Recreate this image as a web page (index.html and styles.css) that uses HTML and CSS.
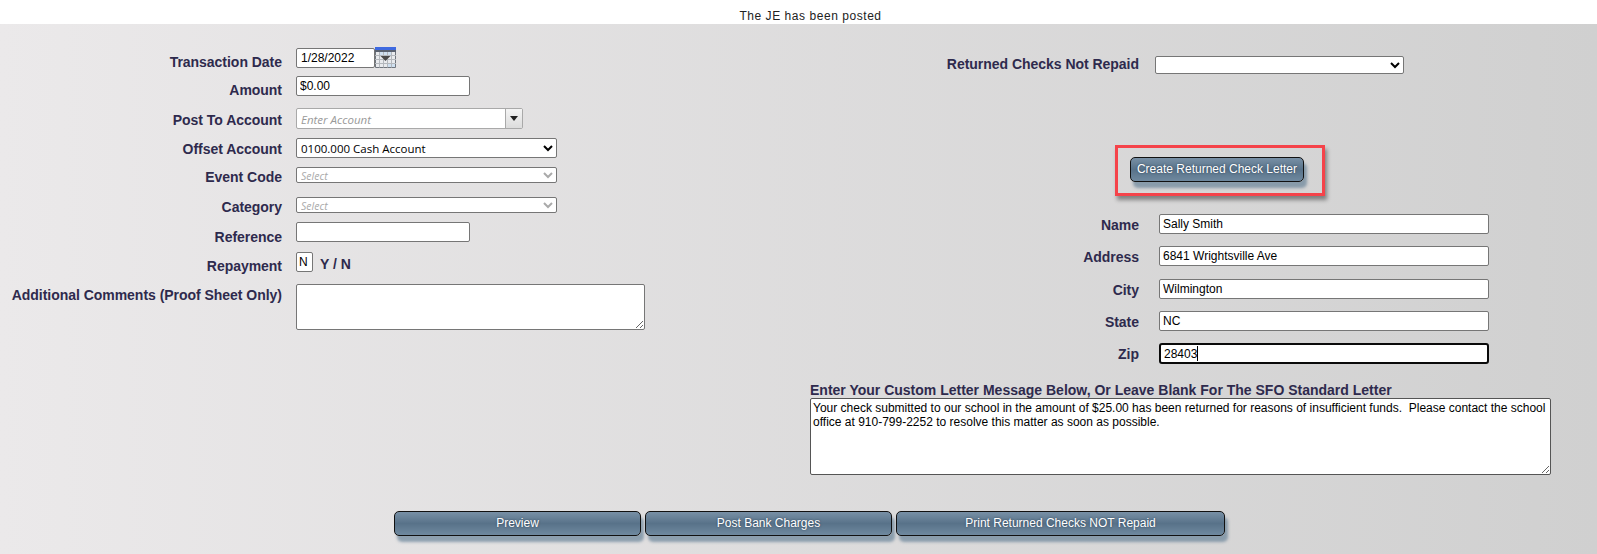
FILE: index.html
```html
<!DOCTYPE html>
<html lang="en">
<head>
<meta charset="utf-8">
<title>Returned Check</title>
<link rel="stylesheet" href="styles.css">
</head>
<body>
<div class="notice">The JE has been posted</div>
<main class="panel">
  <div class="columns">
    <form class="form-left">
      <label class="lbl nudge-6">Transaction Date</label>
      <div class="date-field">
        <input class="field date-input" type="text" value="1/28/2022">
        <svg class="cal" width="21" height="21" viewBox="0 0 21 21" aria-hidden="true">
          <rect x="0" y="0" width="21" height="21" fill="#e9ebee"/>
          <rect x="0" y="0" width="21" height="3" fill="#3f6ae0"/>
          <rect x="0" y="3" width="21" height="2" fill="#5a6270"/>
          <rect x="5" y="5" width="11" height="3" fill="#cfe0f0"/>
          <rect x="12" y="17" width="8" height="3" fill="#cfe0f0"/>
          <path d="M0.5 5V20.5H20.5V5" fill="none" stroke="#70767e" stroke-width="1"/>
          <path d="M4.5 5V20.5M8.5 5V20.5M12.5 5V20.5M16.5 5V20.5M0 8.5H21M0 12.5H21M0 16.5H21" fill="none" stroke="#b4b8bd" stroke-width="1"/>
          <path d="M5.5 9H15.5L10.5 14Z" fill="#4a4a4a"/>
        </svg>
      </div>

      <label class="lbl nudge-6">Amount</label>
      <input class="field short" type="text" value="$0.00">

      <label class="lbl nudge-4">Post To Account</label>
      <div class="combo">
        <span class="combo-text">Enter Account</span>
        <span class="combo-btn"><svg width="8" height="5" viewBox="0 0 8 5" aria-hidden="true"><path d="M0 0H8L4 5Z" fill="#222"/></svg></span>
      </div>

      <label class="lbl nudge-3">Offset Account</label>
      <select class="sel sel-offset"><option>0100.000 Cash Account</option></select>

      <label class="lbl nudge-2">Event Code</label>
      <select class="sel sel-muted"><option>Select</option></select>

      <label class="lbl nudge-2">Category</label>
      <select class="sel sel-muted"><option>Select</option></select>

      <label class="lbl nudge-7">Reference</label>
      <input class="field short" type="text">

      <label class="lbl nudge-6">Repayment</label>
      <div class="yn"><input class="field tiny" type="text" value="N"><span class="yn-text">Y / N</span></div>

      <label class="lbl nudge-3">Additional Comments (Proof Sheet Only)</label>
      <textarea class="area area-comments"></textarea>
    </form>

    <section class="form-right">
      <div class="returned-row">
        <label class="lbl">Returned Checks Not Repaid</label>
        <select class="sel sel-returned"><option></option></select>
      </div>
      <div class="letter-btn-wrap">
        <div class="highlight"><button class="btn" type="button">Create Returned Check Letter</button></div>
      </div>
      <div class="addr">
        <label class="lbl">Name</label><input class="field wide" type="text" value="Sally Smith">
        <label class="lbl">Address</label><input class="field wide" type="text" value="6841 Wrightsville Ave">
        <label class="lbl">City</label><input class="field wide" type="text" value="Wilmington">
        <label class="lbl">State</label><input class="field wide" type="text" value="NC">
        <label class="lbl">Zip</label>
        <div class="zip-wrap"><input class="field wide zip" type="text" value="28403"><span class="caret"></span></div>
      </div>
      <h2 class="msg-title">Enter Your Custom Letter Message Below, Or Leave Blank For The SFO Standard Letter</h2>
      <textarea class="area area-letter">Your check submitted to our school in the amount of $25.00 has been returned for reasons of insufficient funds.  Please contact the school office at 910-799-2252 to resolve this matter as soon as possible.</textarea>
    </section>
  </div>
  <div class="actions">
    <button class="btn act-preview" type="button">Preview</button>
    <button class="btn act-post" type="button">Post Bank Charges</button>
    <button class="btn act-print" type="button">Print Returned Checks NOT Repaid</button>
  </div>
</main>
</body>
</html>
```

FILE: styles.css
```css
* { box-sizing: border-box; }
html, body { margin: 0; padding: 0; height: 100%; overflow: hidden; background: #fff; }
body { font-family: "Liberation Sans", Arial, sans-serif; font-size: 12px; color: #000; }

.notice { height: 24px; line-height: 33px; text-align: center; color: #222; font-size: 12px; letter-spacing: .55px; padding-left: 24px; }

.panel { height: 530px; background: linear-gradient(90deg, #ebe9ea 0%, #d0d0d0 100%); display: flex; flex-direction: column; }
.columns { display: flex; height: 487px; }

.lbl { display: block; font-weight: 700; font-size: 14px; line-height: 16px; color: #2e2a4d; text-align: right; white-space: nowrap; letter-spacing: -.03px; }
.nudge-2 { margin-top: 2px; }
.nudge-3 { margin-top: 3px; }
.nudge-4 { margin-top: 4px; }
.nudge-6 { margin-top: 6px; }
.nudge-7 { margin-top: 7px; }

.form-left { width: 810px; padding-top: 24px; display: grid; grid-template-columns: 282px 1fr; column-gap: 14px; grid-template-rows: 28px 32px 30px 29px 30px 25px 30px 32px auto; align-items: start; justify-items: start; align-content: start; }
.form-left .lbl { justify-self: end; }

.field { display: block; height: 20px; border: 1px solid #767676; border-radius: 2px; background: #fff; padding: 0 3px; font: 12px "Liberation Sans", Arial, sans-serif; color: #000; outline: none; }
.short { width: 174px; }
.tiny { width: 17px; padding: 0 2px; }
.wide { width: 330px; }

.date-field { display: flex; align-items: flex-start; }
.date-input { width: 79px; padding-left: 4px; }
.cal { display: block; margin-top: -1px; }

.combo { width: 227px; height: 21px; display: flex; border: 1px solid #a9a9a9; border-radius: 2px; background: #fff; }
.combo-text { flex: 1; font: italic 11.5px/21px "Open Sans", sans-serif; color: #999; padding-left: 4px; }
.combo-btn { width: 17px; border-left: 1px solid #a9a9a9; background: linear-gradient(#f4f4f4, #dcdcdc); display: flex; align-items: center; justify-content: center; }

.sel { display: block; border-radius: 2px; border: 1px solid #767676; background-color: #fff; color: #000; padding: 0; font: 11.5px "Open Sans", sans-serif; }
.sel-offset { width: 261px; height: 20px; }
.sel-muted { width: 261px; height: 16px; color: #aaa; font: italic 10.5px "Open Sans", sans-serif; }
.sel-returned { width: 249px; height: 18px; margin-left: 16px; }

.yn { display: flex; align-items: center; height: 20px; }
.yn-text { margin: 3px 0 0 7px; font-weight: 700; font-size: 14px; color: #2e2a4d; }

.area { display: block; border: 1px solid #767676; border-radius: 2px; background: #fff; font: 12px/14px "Liberation Sans", Arial, sans-serif; color: #000; padding: 2px; outline: none; }
.area-comments { width: 349px; height: 46px; }
.area-letter { width: 741px; height: 77px; border-color: #555; }

.form-right { flex: 1; padding-top: 32px; display: flex; flex-direction: column; align-items: flex-start; }
.returned-row { display: flex; width: 741px; height: 18px; align-items: flex-start; }
.returned-row .lbl { width: 329px; }

.letter-btn-wrap { width: 741px; margin-top: 71px; padding-left: 305px; }
.highlight { width: 210px; height: 51px; border: 3px solid #f5434a; box-shadow: 2px 4px 4px rgba(0,0,0,.4); display: flex; align-items: center; justify-content: center; padding: 0 6px 2px 0; margin-bottom: 18px; }

.btn { display: block; height: 25px; padding: 0 0 2px; border: 1px solid #111; border-radius: 5px; color: #fff; font: 12px "Liberation Sans", Arial, sans-serif; background: linear-gradient(#7890a6 0%, #587289 50%, #6f899f 100%); box-shadow: 3px 6px 3px rgba(96,124,148,.65); text-shadow: 0 0 2px rgba(20,40,60,.7); }
.highlight .btn { width: 174px; }

.addr { display: grid; grid-template-columns: 329px 330px; column-gap: 20px; grid-template-rows: 32px 33px 32px 32px 21px; align-items: start; }
.addr .lbl { margin-top: 3px; }
.zip-wrap { position: relative; }
.zip { border: 2px solid #0a0a0a; border-radius: 3px; height: 21px; padding: 0 3px; }
.caret { position: absolute; left: 38px; top: 3px; width: 1px; height: 15px; background: #000; }

.msg-title { margin: 18px 0 0 0; font-size: 14px; line-height: 16px; font-weight: 700; color: #2e2a4d; white-space: nowrap; }

.actions { display: flex; gap: 4px; padding-left: 394px; }
.act-preview { width: 247px; }
.act-post { width: 247px; }
.act-print { width: 329px; }
```
